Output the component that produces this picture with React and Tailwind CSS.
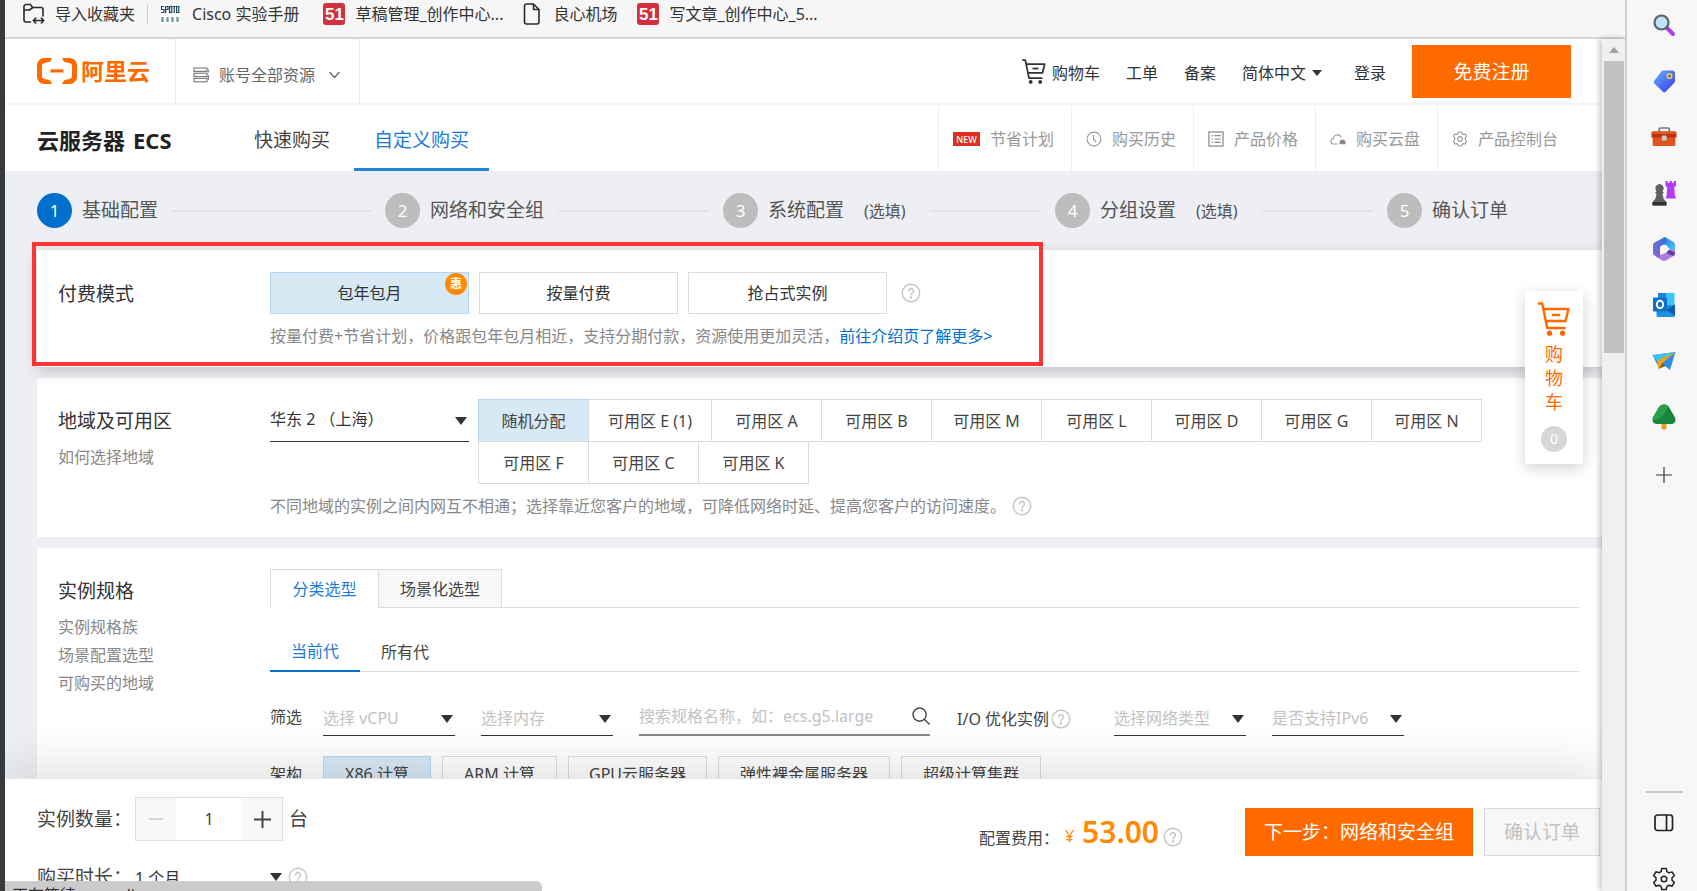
import React from "react";

/* ---------- icons ---------- */

function ImportFolderIcon() {
  return (
    <svg width="22" height="22" viewBox="0 0 22 22" fill="none" stroke="#2b2b2b" strokeWidth="1.6" strokeLinecap="round" strokeLinejoin="round">
      <path d="M7.5 19H3a2 2 0 0 1-2-2V3.5a2 2 0 0 1 2-2h4.2l2.6 3H18a2 2 0 0 1 2 2V13" />
      <path d="M1 7h5.5L9.8 4.5" />
      <path d="M10.5 17.5h10M12.8 15l-2.5 2.5 2.5 2.5M18.3 15l2.5 2.5-2.5 2.5" />
    </svg>
  );
}

function SpotoIcon() {
  return (
    <svg width="20" height="20" viewBox="0 0 20 20" aria-hidden="true">
      <rect width="20" height="20" fill="#fff" />
      <g fill="none" stroke="#1d4a5c" strokeWidth="1.2">
        <path d="M4 2.5H1.5v3H4v3H1" />
        <path d="M5.6 9V2.5H8v3H5.6" />
        <rect x="9.6" y="2.5" width="2.2" height="6" />
        <path d="M12.8 2.5h3M14.3 2.5V9" />
        <rect x="16.6" y="2.5" width="2.2" height="6" />
      </g>
      <path d="M2.5 13v5M7.5 13v5M12.5 13v5M17.5 13v5" stroke="#7c98a3" strokeWidth="2.4" />
    </svg>
  );
}

function FiftyOneIcon() {
  return (
    <span className="flex h-[22px] w-[22px] items-center justify-center rounded-[3px] bg-[#d22f3f] font-['Liberation_Sans',sans-serif] text-[17px] leading-none font-bold text-white">
      51
    </span>
  );
}

function FileIcon() {
  return (
    <svg width="18" height="22" viewBox="0 0 18 22" fill="none" stroke="#2b2b2b" strokeWidth="1.6" strokeLinejoin="round">
      <path d="M3.5 1h7l5.5 5.5V19a2 2 0 0 1-2 2H3.5a2 2 0 0 1-2-2V3a2 2 0 0 1 2-2z" />
      <path d="M10.5 1v5.5H16" />
    </svg>
  );
}

function LogoMark() {
  return (
    <svg width="40" height="26" viewBox="0 0 40 26" fill="#ff6a00" aria-hidden="true">
      <path d="M15 0H7.5C3.2 0 0 3.2 0 7.5v11C0 22.8 3.2 26 7.5 26H15l-2-3.800-5.200-1.200C5.700 20.500 5 19.600 5 18V8c0-1.600.7-2.500 2.800-3L13 3.800z" />
      <path d="M25 0h7.500C36.800 0 40 3.200 40 7.500v11c0 4.300-3.200 7.500-7.500 7.500H25l2-3.800 5.200-1.200c2.100-.5 2.800-1.400 2.800-3V8c0-1.600-.7-2.500-2.800-3L27 3.800z" />
      <rect x="13.500" y="11.300" width="13" height="3.200" />
    </svg>
  );
}

function ServerIcon() {
  return (
    <svg width="16" height="16" viewBox="0 0 16 16" fill="none" stroke="#777" strokeWidth="1.100">
      <rect x="1" y="1" width="13" height="3.400" />
      <rect x="1" y="6.200" width="13" height="3.400" />
      <rect x="1" y="11.400" width="13" height="3.400" />
      <path d="M15.300 2.500v3M15.300 8v5" />
    </svg>
  );
}

function CartIcon({ className }) {
  return (
    <svg className={className} viewBox="0 0 32 34" fill="none" stroke="currentColor" strokeWidth="2.400" strokeLinejoin="round">
      <path d="M0 1.500h4.200l5 24.500h18.300" />
      <path d="M5.500 7H30.500L27.500 19H8" />
      <path d="M14 13h8" />
      <circle cx="11.500" cy="31.200" r="2.600" fill="currentColor" stroke="none" />
      <circle cx="24.500" cy="31.200" r="2.600" fill="currentColor" stroke="none" />
    </svg>
  );
}

function HelpIcon() {
  return (
    <svg className="shrink-0" width="20" height="20" viewBox="0 0 20 20" fill="none" stroke="#c4c4c4" strokeWidth="1.400" strokeLinecap="round">
      <circle cx="10" cy="10" r="8.700" />
      <path d="M7.600 7.900a2.400 2.400 0 1 1 3.700 2.100c-.9.600-1.300 1-1.300 2" />
      <circle cx="10" cy="14.400" r="0.500" fill="#c4c4c4" />
    </svg>
  );
}

function ClockIcon() {
  return (
    <svg width="16" height="16" viewBox="0 0 16 16" fill="none" stroke="#999" strokeWidth="1.100">
      <circle cx="8" cy="8" r="6.900" />
      <path d="M7.500 3.800v4.400l2.600 3" />
    </svg>
  );
}

function ListIcon() {
  return (
    <svg width="16" height="16" viewBox="0 0 17 17" fill="none" stroke="#888" strokeWidth="1.300">
      <rect x="1" y="1" width="15" height="15" />
      <path d="M4 5h1.500M4 8.500h1.500M4 12h1.500M7 5h6.500M7 8.500h6.500M7 12h6.500" />
    </svg>
  );
}

function CloudDiskIcon() {
  return (
    <svg width="16" height="16" viewBox="0 0 16 16" fill="none" stroke="#999" strokeWidth="1.100">
      <path d="M7.500 13H3.600a2.600 2.600 0 0 1-.3-5.200A4.200 4.200 0 0 1 11.300 6.300" />
      <path d="M9.500 13.300v-2.600l1.300-2h3.400l1.300 2v2.600z" fill="#888" stroke="none" />
    </svg>
  );
}

function HexGearIcon() {
  return (
    <svg width="16" height="16" viewBox="0 0 16 16" fill="none" stroke="#999" strokeWidth="1.100" strokeLinejoin="round">
      <path d="M6.500 1h3l.5 1.600 1.400.8 1.700-.4 1.400 2.500-1.200 1.300v2.400l1.200 1.300-1.400 2.500-1.700-.4-1.400.8L9.500 15h-3L6 13.400l-1.400-.8-1.700.4-1.400-2.500 1.200-1.300V6.800L1.500 5.500 2.900 3l1.700.4L6 2.600z" />
      <circle cx="8" cy="8" r="2.400" />
    </svg>
  );
}

function SearchIcon() {
  return (
    <svg width="18" height="18" viewBox="0 0 18 18" fill="none" stroke="#444" strokeWidth="1.400" strokeLinecap="round">
      <circle cx="7.600" cy="7.600" r="6.600" />
      <path d="M12.400 12.400l4.800 4.600" />
    </svg>
  );
}

function Caret({ className }) {
  return (
    <svg className={className} width="12" height="8" viewBox="0 0 12 8" fill="#333" aria-hidden="true">
      <path d="M0 0h12L6 8z" />
    </svg>
  );
}

/* ---------- browser sidebar icons ---------- */

function SideSearch() {
  return (
    <svg width="24" height="24" viewBox="0 0 24 24">
      <path d="M15.500 15.500l5.500 5.500" stroke="#b13df0" strokeWidth="4" strokeLinecap="round" />
      <circle cx="9.500" cy="9.500" r="7" fill="#bfe3fb" stroke="#5d6266" strokeWidth="2.200" />
    </svg>
  );
}

function SideTag() {
  return (
    <svg width="24" height="24" viewBox="0 0 24 24">
      <defs>
        <linearGradient id="tag" x1="0" y1="0" x2="1" y2="1">
          <stop offset="0" stopColor="#5fb4fb" />
          <stop offset="1" stopColor="#3d35ee" />
        </linearGradient>
      </defs>
      <path d="M11.500 1.500h8.500a3 3 0 0 1 3 3V12c0 .8-.3 1.500-.9 2l-8.300 8.500a2.200 2.200 0 0 1-3.200 0l-8.200-8a2.200 2.200 0 0 1 0-3.100l7-8.900c.6-.7 1.300-1 2.100-1z" fill="url(#tag)" />
      <circle cx="17.500" cy="7" r="2.300" fill="#5d6fb5" stroke="#f2cf3b" strokeWidth="1.600" />
    </svg>
  );
}

function SideToolbox() {
  return (
    <svg width="26" height="24" viewBox="0 0 24 24" preserveAspectRatio="none">
      <path d="M7.500 7V4.500a1.500 1.500 0 0 1 1.500-1.500h6.500A1.500 1.500 0 0 1 17 4.500V7" fill="none" stroke="#777" strokeWidth="1.600" />
      <path d="M1.500 10h21v9.500a1.500 1.500 0 0 1-1.500 1.500H3a1.500 1.500 0 0 1-1.500-1.500z" fill="#dd5420" />
      <path d="M2 6.500h20a1.500 1.500 0 0 1 1.500 1.500v4.500H.5V8A1.500 1.500 0 0 1 2 6.500z" fill="#b9350f" />
      <path d="M2 6.500h20a1.500 1.500 0 0 1 1.500 1.500v1H.5V8A1.500 1.500 0 0 1 2 6.500z" fill="#e0561c" />
      <rect x="10" y="10.500" width="4.500" height="5" rx="1" fill="#c9c9c9" />
    </svg>
  );
}

function SideChess() {
  return (
    <svg width="24" height="26" viewBox="0 0 24 26">
      <path d="M13.500 1h2.200v2h1.800V1h2.400v2h1.800V1H24v5l-1.800 1.500.8 8.500 1 2.500H13.500l1-2.500.8-8.500L13.500 6z" fill="#b23cf2" />
      <path d="M7.500 4a4.300 4.300 0 0 1 3 7.300l1.500 1.200-1.500 1.300 1.200 5.200L14.500 22v3.500H.5V22l2.800-3 1.200-5.200L3 12.500l1.500-1.200A4.300 4.300 0 0 1 7.500 4z" fill="#5f6264" />
      <path d="M.5 22h14v3.500H.5z" fill="#333" />
    </svg>
  );
}

function SideOffice() {
  return (
    <svg width="24" height="26" viewBox="0 0 24 26">
      <defs>
        <linearGradient id="offA" x1="0" y1="1" x2="1" y2="0">
          <stop offset="0" stopColor="#8a6ad8" />
          <stop offset="1" stopColor="#2f6fd6" />
        </linearGradient>
        <linearGradient id="offB" x1="0" y1="0" x2="1" y2="1">
          <stop offset="0" stopColor="#2b7fd9" />
          <stop offset="1" stopColor="#4cc6f5" />
        </linearGradient>
      </defs>
      <path d="M12 1c1 0 1.600.2 2.500.7l7 4.300A3 3 0 0 1 23 8.600V16.500l-7-5L8 7z" fill="url(#offB)" />
      <path d="M23 14v3.300a3 3 0 0 1-1.500 2.600l-7.200 4.400a4.500 4.500 0 0 1-4.600 0L4 20.800 13 17l5-4z" fill="#b07bdc" />
      <path d="M16.500 14l6.500 2.500c0 1.500-.6 2.600-1.500 3.400L14 17z" fill="#5b3f9c" />
      <path d="M13 .9L2.500 6.500A3 3 0 0 0 1 9v8c0 1 .5 2 1.500 2.500L6 21.500c1.300.2 2-.5 2-1.500V11L15 6z" fill="url(#offA)" />
      <circle cx="12.200" cy="13" r="4.200" fill="#f7f7f7" />
    </svg>
  );
}

function SideOutlook() {
  return (
    <svg width="24" height="26" viewBox="0 0 24 26">
      <rect x="6" y="1" width="16.500" height="15" rx="1" fill="#3cc4f4" />
      <rect x="6" y="1" width="8" height="8" fill="#1a86d8" />
      <path d="M4.500 13l18.500 0v10.500a1.500 1.500 0 0 1-1.500 1.500H6a1.500 1.500 0 0 1-1.500-1.500z" fill="#1c93df" />
      <path d="M23 12.500v11L14 18z" fill="#0f5fa8" />
      <rect x="1" y="5.500" width="14" height="14" rx="1.200" fill="#0f6fca" />
      <ellipse cx="8" cy="12.500" rx="3.200" ry="3.700" fill="none" stroke="#fff" strokeWidth="1.900" />
    </svg>
  );
}

function SidePlane() {
  return (
    <svg width="24" height="20" viewBox="0 0 24 20">
      <path d="M.5 4L23.500 1 18 19l-5-4-2 .5-5-.5z" fill="#2f8df0" />
      <path d="M.5 4L23.500 1 6 11z" fill="#3fc3f3" />
      <path d="M23.500 1L5 9.500l1.500 8.500 4-6z" fill="#e9a31c" />
      <path d="M6.500 18l4-6 3 3z" fill="#8a5a10" />
    </svg>
  );
}

function SideTree() {
  return (
    <svg width="24" height="26" viewBox="0 0 24 26">
      <rect x="9.500" y="18" width="5" height="7.500" rx="1.500" fill="#eaa021" />
      <path d="M12 .5c2.500 0 4 1.200 5.200 3l5.300 9c2.200 4 .5 7.500-3.500 7.500H5c-4 0-5.700-3.500-3.500-7.500l5.300-9C8 1.700 9.500.5 12 .5z" fill="#1a8439" />
      <path d="M12 .5C9.500.5 8 1.700 6.800 3.500l-5.300 9C.8 14 .6 15.200.8 16.300 8 16 14.500 10 15.800 1.800A6 6 0 0 0 12 .5z" fill="#2ba04b" />
    </svg>
  );
}

function PlusThin() {
  return (
    <svg width="16" height="16" viewBox="0 0 16 16" stroke="#333" strokeWidth="1.200">
      <path d="M8 0v16M0 8h16" />
    </svg>
  );
}

function PanelIcon() {
  return (
    <svg width="20" height="18" viewBox="0 0 20 18" fill="none" stroke="#222" strokeWidth="1.700">
      <rect x="1" y="1" width="17.500" height="15.500" rx="2.500" />
      <path d="M12.500 1v15.500" />
    </svg>
  );
}

function CogIcon() {
  return (
    <svg width="24" height="24" viewBox="0 0 24 24" fill="none" stroke="#222" strokeWidth="1.500" strokeLinejoin="round">
      <path d="M9.800 1.500h4.400l.7 3.100 2.200 1.300 3-1 2.200 3.800-2.300 2.100v2.500l2.300 2.100-2.200 3.800-3-1-2.200 1.300-.7 3.100H9.800l-.7-3.100-2.200-1.300-3 1-2.200-3.800L4 13.200v-2.500L1.700 8.600l2.200-3.800 3 1 2.200-1.300z" />
      <circle cx="12" cy="12" r="2.800" />
    </svg>
  );
}

/* ---------- building blocks ---------- */

function UnderlineSelect({ id, label, option, className = "", muted = false }) {
  return (
    <div className={`relative ${className}`}>
      <select
        id={id}
        aria-label={label}
        className={`h-full w-full appearance-none border-b-[1px] border-[#333] bg-transparent pr-6 pb-0.5 text-base outline-none ${muted ? "text-[#c2c2c2]" : "text-[#333]"}`}
      >
        <option>{option}</option>
      </select>
      <Caret className="pointer-events-none absolute top-1/2 right-0.5 -mt-1" />
    </div>
  );
}

function Card({ title, links = [], className = "", children }) {
  return (
    <section className={`relative grid grid-cols-[212px_1fr] bg-white pr-[23px] pl-[21px] ${className}`}>
      <div>
        <h2 className="flex h-11 items-center text-[19px] text-[#333]">{title}</h2>
        <ul>
          {links.map((l) => (
            <li key={l} className="h-7">
              <a href="#" className="text-base leading-7 text-[#888]">{l}</a>
            </li>
          ))}
        </ul>
      </div>
      <div className="min-w-0">{children}</div>
    </section>
  );
}

const quickLinks = [
  { label: "购买历史", icon: <ClockIcon /> },
  { label: "产品价格", icon: <ListIcon /> },
  { label: "购买云盘", icon: <CloudDiskIcon /> },
];

const steps = [
  { n: 1, label: "基础配置" },
  { n: 2, label: "网络和安全组" },
  { n: 3, label: "系统配置", optional: true },
  { n: 4, label: "分组设置", optional: true },
  { n: 5, label: "确认订单" },
];

const zones = [
  "随机分配", "可用区 E (1)", "可用区 A", "可用区 B", "可用区 M", "可用区 L",
  "可用区 D", "可用区 G", "可用区 N", "可用区 F", "可用区 C", "可用区 K",
];

const archs = [
  { label: "X86 计算", w: "w-[108px]" },
  { label: "ARM 计算", w: "w-[115px]" },
  { label: "GPU云服务器", w: "w-[139px]" },
  { label: "弹性裸金属服务器", w: "w-[172px]" },
  { label: "超级计算集群", w: "w-[140px]" },
];

const sideIcons = [
  ["搜索", <SideSearch />], ["购物", <SideTag />], ["工具", <SideToolbox />], ["游戏", <SideChess />],
  ["Office", <SideOffice />], ["Outlook", <SideOutlook />], ["Drop", <SidePlane />], ["E-tree", <SideTree />],
];

function BookmarksBar() {
  return (
    <nav className="h-[39px] shrink-0 border-b-2 border-[#d6d6d6] bg-[#f6f6f6]">
      <div className="flex h-7 items-center pl-[18px] text-base text-[#333]">
        <a href="#" className="flex items-center gap-2.5"><ImportFolderIcon />导入收藏夹</a>
        <span className="mx-3 h-5 w-px bg-[#ccc]" />
        <a href="#" className="flex items-center gap-3"><SpotoIcon />Cisco 实验手册</a>
        <a href="#" className="ml-6 flex items-center gap-2.5"><FiftyOneIcon />草稿管理_创作中心...</a>
        <a href="#" className="ml-5 flex items-center gap-3"><FileIcon />良心机场</a>
        <a href="#" className="ml-5 flex items-center gap-2.5"><FiftyOneIcon />写文章_创作中心_5...</a>
      </div>
    </nav>
  );
}

function TopHeader() {
  return (
    <header className="flex h-[66px] shrink-0 items-stretch border-b-2 border-[#f4f4f4] bg-white text-base text-[#333]">
      <a href="#" className="flex w-[171px] items-center gap-1 border-r border-[#e8e8e8] pl-8 text-[23px] leading-none font-bold text-[#ff6a00]">
        <LogoMark />阿里云
      </a>
      <button className="flex w-[184px] items-center border-r border-[#e8e8e8] pt-2 pl-[17px] text-[#666]">
        <ServerIcon />
        <span className="ml-2.5">账号全部资源</span>
        <svg className="ml-3.5" width="11" height="8" viewBox="0 0 11 8" fill="none" stroke="#666" strokeWidth="1.300"><path d="M.5 1l5 5.500 5-5.500" /></svg>
      </button>
      <nav className="ml-auto flex items-center pr-[31px]">
        <a href="#" className="flex items-center gap-1.5 pt-1"><CartIcon className="mb-1 h-[25px] w-6" />购物车</a>
        <a href="#" className="ml-[26px] pt-1">工单</a>
        <a href="#" className="ml-[26px] pt-1">备案</a>
        <button className="ml-[26px] flex items-center gap-1.5 pt-1">简体中文<svg width="10" height="6" viewBox="0 0 10 6" fill="#333"><path d="M0 0h10L5 6z" /></svg></button>
        <a href="#" className="ml-8 pt-1">登录</a>
        <button className="ml-[26px] h-[53px] w-[159px] bg-[#ff6a00] pt-0.5 text-[19px] text-white">免费注册</button>
      </nav>
    </header>
  );
}

function ProductHeader() {
  return (
    <div className="flex h-[66px] shrink-0 items-stretch bg-white">
      <h1 className="flex w-[229px] items-center gap-2 pt-1 pl-8 text-[22px] font-bold text-[#222]">云服务器 <span>ECS</span></h1>
      <button className="w-[120px] px-5 pt-1 text-left text-[19px] text-[#444]">快速购买</button>
      <button className="w-[135px] border-b-[3px] border-[#1f85d6] pt-[7px] text-[19px] text-[#1a7ad6]">自定义购买</button>
      <nav className="ml-auto flex items-stretch text-base text-[#999]">
        <a href="#" className="flex items-center border-l border-[#f0f0f0] pt-0.5 pr-[17px] pl-3.5">
          <span className="mr-2.5 flex h-3.5 w-[27px] items-center justify-center bg-[#dc3023] text-[9px] leading-none font-medium text-white">NEW</span>
          节省计划
        </a>
        {quickLinks.map((q) => (
          <a key={q.label} href="#" className="flex w-[122px] items-center gap-2.5 border-l border-[#f0f0f0] pt-0.5 pl-3.5">{q.icon}{q.label}</a>
        ))}
        <a href="#" className="flex w-[165px] items-center gap-2.5 border-l border-[#f0f0f0] pt-0.5 pl-3.5"><HexGearIcon />产品控制台</a>
      </nav>
    </div>
  );
}

function Steps() {
  return (
    <ol className="grid h-[79px] shrink-0 grid-cols-[348fr_338fr_332fr_332fr_215fr] items-center pl-8">
      {steps.map((s) => (
        <li key={s.n} className="flex items-center">
          <span className={`flex h-[35px] w-[35px] items-center justify-center rounded-full text-[17px] text-white ${s.n === 1 ? "bg-[#0070cc]" : "bg-[#bdbdbd]"}`}>{s.n}</span>
          <span className="ml-2.5 text-[19px] text-[#555]">{s.label}</span>
          {s.optional && <span className="mr-6 ml-5 text-base text-[#555]">(选填)</span>}
          {s.n < 5 && <span className={`h-0.5 flex-1 bg-[#e2e3e6] ${s.optional ? "mr-3.5" : "mx-3.5"}`} />}
        </li>
      ))}
    </ol>
  );
}

function PaymentCard() {
  const btn = "relative h-[42px] w-[199px] border text-base text-[#333]";
  return (
    <Card title="付费模式" className="z-10 pt-[22px] pb-[19px] shadow-[0_4px_14px_rgba(0,0,0,0.2)]">
      <div className="flex items-center gap-2.5">
        <button className={`${btn} border-[#b5d8f2] bg-[#d8e9f6]`}>
          包年包月
          <span className="absolute top-0 right-px flex h-[22px] w-[22px] items-center justify-center rounded-full bg-[#ff8a00] text-xs leading-none font-bold text-white">惠</span>
        </button>
        <button className={`${btn} border-[#dcdcdc] bg-white`}>按量付费</button>
        <button className={`${btn} mr-1 border-[#dcdcdc] bg-white`}>抢占式实例</button>
        <HelpIcon />
      </div>
      <p className="mt-2.5 h-6 text-base leading-6 whitespace-nowrap text-[#888]">
        按量付费+节省计划，价格跟包年包月相近，支持分期付款，资源使用更加灵活，<a href="#" className="text-[#0070cc]">前往介绍页了解更多&gt;</a>
      </p>
      <div className="pointer-events-none absolute -top-2 -left-[5px] h-[124px] w-[1011px] border-4 border-[#fb3434]" />
    </Card>
  );
}

function RegionCard() {
  return (
    <Card title="地域及可用区" links={["如何选择地域"]} className="mt-[11px] pt-[21px] pb-[19px]">
      <div className="flex items-start gap-[9px]">
        <UnderlineSelect label="地域" option="华东 2 （上海）" className="h-[43px] w-[199px] shrink-0" />
        <div className="flex max-w-[1012px] flex-wrap pt-px pl-px">
          {zones.map((z, i) => (
            <button
              key={z}
              className={`-mt-px -ml-px h-[43px] min-w-[111px] border px-[19px] text-base text-[#444] ${i === 0 ? "border-[#b5d8f2] bg-[#d8e9f6]" : "border-[#dcdcdc] bg-white"}`}
            >
              {z}
            </button>
          ))}
        </div>
      </div>
      <div className="mt-2.5 flex h-6 items-center gap-1.5 text-base text-[#888]">
        不同地域的实例之间内网互不相通；选择靠近您客户的地域，可降低网络时延、提高您客户的访问速度。
        <HelpIcon />
      </div>
    </Card>
  );
}

function SpecCard() {
  return (
    <Card title="实例规格" links={["实例规格族", "场景配置选型", "可购买的地域"]} className="mt-[11px] pt-[21px]">
      <div className="flex h-[39px] text-base">
        <button className="w-[108px] border-t border-l border-[#dcdcdc] text-[#1a7ad6]">分类选型</button>
        <button className="w-[124px] border border-[#dcdcdc] bg-[#f8f8f8] text-[#444]">场景化选型</button>
        <span className="flex-1 border-b border-[#dcdcdc]" />
      </div>
      <div className="mt-6 flex h-10 text-base">
        <button className="w-[90px] border-b-2 border-[#0070cc] text-[#1a7ad6]">当前代</button>
        <button className="w-[90px] border-b border-[#dcdcdc] text-[#444]">所有代</button>
        <span className="flex-1 border-b border-[#dcdcdc]" />
      </div>
      <div className="mt-[30px] flex h-[34px] items-center text-base text-[#444]">
        <span className="mr-[21px] pb-1">筛选</span>
        <UnderlineSelect muted label="vCPU" option="选择 vCPU" className="h-[34px] w-[132px]" />
        <UnderlineSelect muted label="内存" option="选择内存" className="ml-[26px] h-[34px] w-[132px]" />
        <label className="ml-[26px] flex h-[34px] w-[291px] items-center border-b-2 border-[#888] pb-1">
          <input aria-label="搜索规格" placeholder="搜索规格名称，如：ecs.g5.large" className="min-w-0 flex-1 bg-transparent outline-none placeholder:text-[#c2c2c2]" />
          <SearchIcon />
        </label>
        <span className="mr-0.5 ml-[27px]">I/O 优化实例</span>
        <HelpIcon />
        <UnderlineSelect muted label="网络类型" option="选择网络类型" className="ml-[43px] h-[34px] w-[132px]" />
        <UnderlineSelect muted label="IPv6" option="是否支持IPv6" className="ml-[26px] h-[34px] w-[132px]" />
      </div>
      <div className="mt-5 flex items-center gap-[11px] text-base text-[#444]">
        <span className="mr-2.5">架构</span>
        {archs.map((a, i) => (
          <button key={a.label} className={`h-9 border ${a.w} ${i === 0 ? "border-[#b5d8f2] bg-[#d8e9f6]" : "border-[#dcdcdc] bg-white"}`}>{a.label}</button>
        ))}
      </div>
    </Card>
  );
}

function OrderBar() {
  return (
    <footer className="relative z-20 flex shrink-0 items-start border-t border-[#e6e6e6] bg-white pr-0.5 pb-0.5 pl-8 shadow-[0_-12px_48px_rgba(0,0,0,0.12)]">
      <div className="pt-[18px] text-[19px] text-[#444]">
        <div className="flex h-11 items-center">
          <label htmlFor="qty" className="w-[98px]">实例数量：</label>
          <div className="flex h-11 w-[148px] border border-[#dedede]">
            <button aria-label="减少" className="flex w-10 items-center justify-center bg-[#f7f8fa]"><span className="h-0.5 w-3.5 bg-[#d5d5d5]" /></button>
            <input id="qty" defaultValue="1" className="min-w-0 flex-1 text-center text-base outline-none" />
            <button aria-label="增加" className="flex w-10 items-center justify-center bg-[#f7f8fa]">
              <svg width="17" height="17" viewBox="0 0 17 17" stroke="#444" strokeWidth="2"><path d="M8.500 0v17M0 8.500h17" /></svg>
            </button>
          </div>
          <span className="ml-1.5">台</span>
        </div>
        <div className="mt-6 flex h-6 items-center">
          <label htmlFor="duration" className="w-[98px]">购买时长：</label>
          <UnderlineSelect id="duration" option="1 个月" className="h-7 w-[149px]" />
          <span className="ml-1 shrink-0"><HelpIcon /></span>
        </div>
      </div>
      <div className="ml-auto flex items-center pt-[29px]">
        <span className="pt-3 text-base text-[#444]">配置费用：</span>
        <span className="ml-1.5 pt-2 text-base text-[#ff8a00]">¥</span>
        <span className="ml-2 text-[30px] leading-none font-semibold text-[#ff8a00]">53.00</span>
        <span className="ml-1 pt-2.5"><HelpIcon /></span>
        <button className="ml-[62px] h-12 w-[228px] bg-[#ff6a00] text-[19px] text-white">下一步：网络和安全组</button>
        <button disabled className="ml-[11px] h-12 w-[116px] border border-[#dcdcdc] bg-[#f7f7f7] text-[19px] text-[#c2c2c2]">确认订单</button>
      </div>
    </footer>
  );
}

function FloatingCart() {
  return (
    <button className="absolute top-[252px] right-[19px] z-20 flex w-[58px] flex-col items-center bg-white pt-[11px] pb-3 text-[18px] text-[#ff6a00] shadow-[0_4px_14px_rgba(0,0,0,0.18)]">
      <CartIcon className="h-[34px] w-8" />
      <span className="mt-1.5 flex flex-col leading-6"><span>购</span><span>物</span><span>车</span></span>
      <span className="mt-3 flex h-[26px] w-[26px] items-center justify-center rounded-full bg-[#d6d7d9] text-sm text-white">0</span>
    </button>
  );
}

export default function App() {
  return (
    <div className="relative flex h-screen overflow-hidden bg-[#f7f7f7] font-['Noto_Sans','Noto_Sans_CJK_SC',sans-serif]">
      <div className="w-[5px] shrink-0 bg-[#373a3e]" />
      <div className="flex min-w-0 flex-1 flex-col">
        <BookmarksBar />
        <div className="flex min-h-0 flex-1">
          <main className="relative flex min-w-0 flex-1 flex-col overflow-hidden bg-[#eeeff4]">
            <TopHeader />
            <ProductHeader />
            <div className="min-h-0 flex-1 overflow-hidden">
              <Steps />
              <div className="pl-8">
                <PaymentCard />
                <RegionCard />
                <SpecCard />
              </div>
            </div>
            <OrderBar />
            <FloatingCart />
          </main>
          <div className="relative z-30 flex w-[23px] shrink-0 flex-col items-center bg-[#f0f0f0] shadow-[-2px_0_6px_rgba(0,0,0,0.25)]">
            <span className="flex h-[22px] items-center"><svg width="10" height="6" viewBox="0 0 10 6" fill="#a3a3a3"><path d="M5 0l5 6H0z" /></svg></span>
            <span className="h-[292px] w-5 bg-[#c1c1c1]" />
          </div>
        </div>
      </div>
      <aside className="relative z-40 flex w-[72px] shrink-0 flex-col items-center border-l-2 border-[#cfcfcf] bg-[#f7f7f7] pt-[5px] pl-1">
        {sideIcons.map(([name, icon]) => (
          <button key={name} aria-label={name} className="mb-4 flex h-10 w-10 items-center justify-center">{icon}</button>
        ))}
        <button aria-label="添加" className="flex h-11 w-10 items-center justify-center"><PlusThin /></button>
        <span className="mt-auto h-0.5 w-[37px] bg-[#c8c8c8]" />
        <button aria-label="侧边栏" className="mt-2.5 flex h-10 w-10 items-center justify-center"><PanelIcon /></button>
        <button aria-label="设置" className="mt-4 -mb-2 flex h-10 w-10 items-center justify-center"><CogIcon /></button>
      </aside>
      <div role="status" className="absolute bottom-0 left-[5px] z-50 h-2.5 w-[537px] overflow-hidden rounded-tr-md bg-[#cbcbcb] pt-0.5 pl-[7px] text-base leading-6 text-[#333]">
        正在等待 umx.aliyun.com...
      </div>
    </div>
  );
}
